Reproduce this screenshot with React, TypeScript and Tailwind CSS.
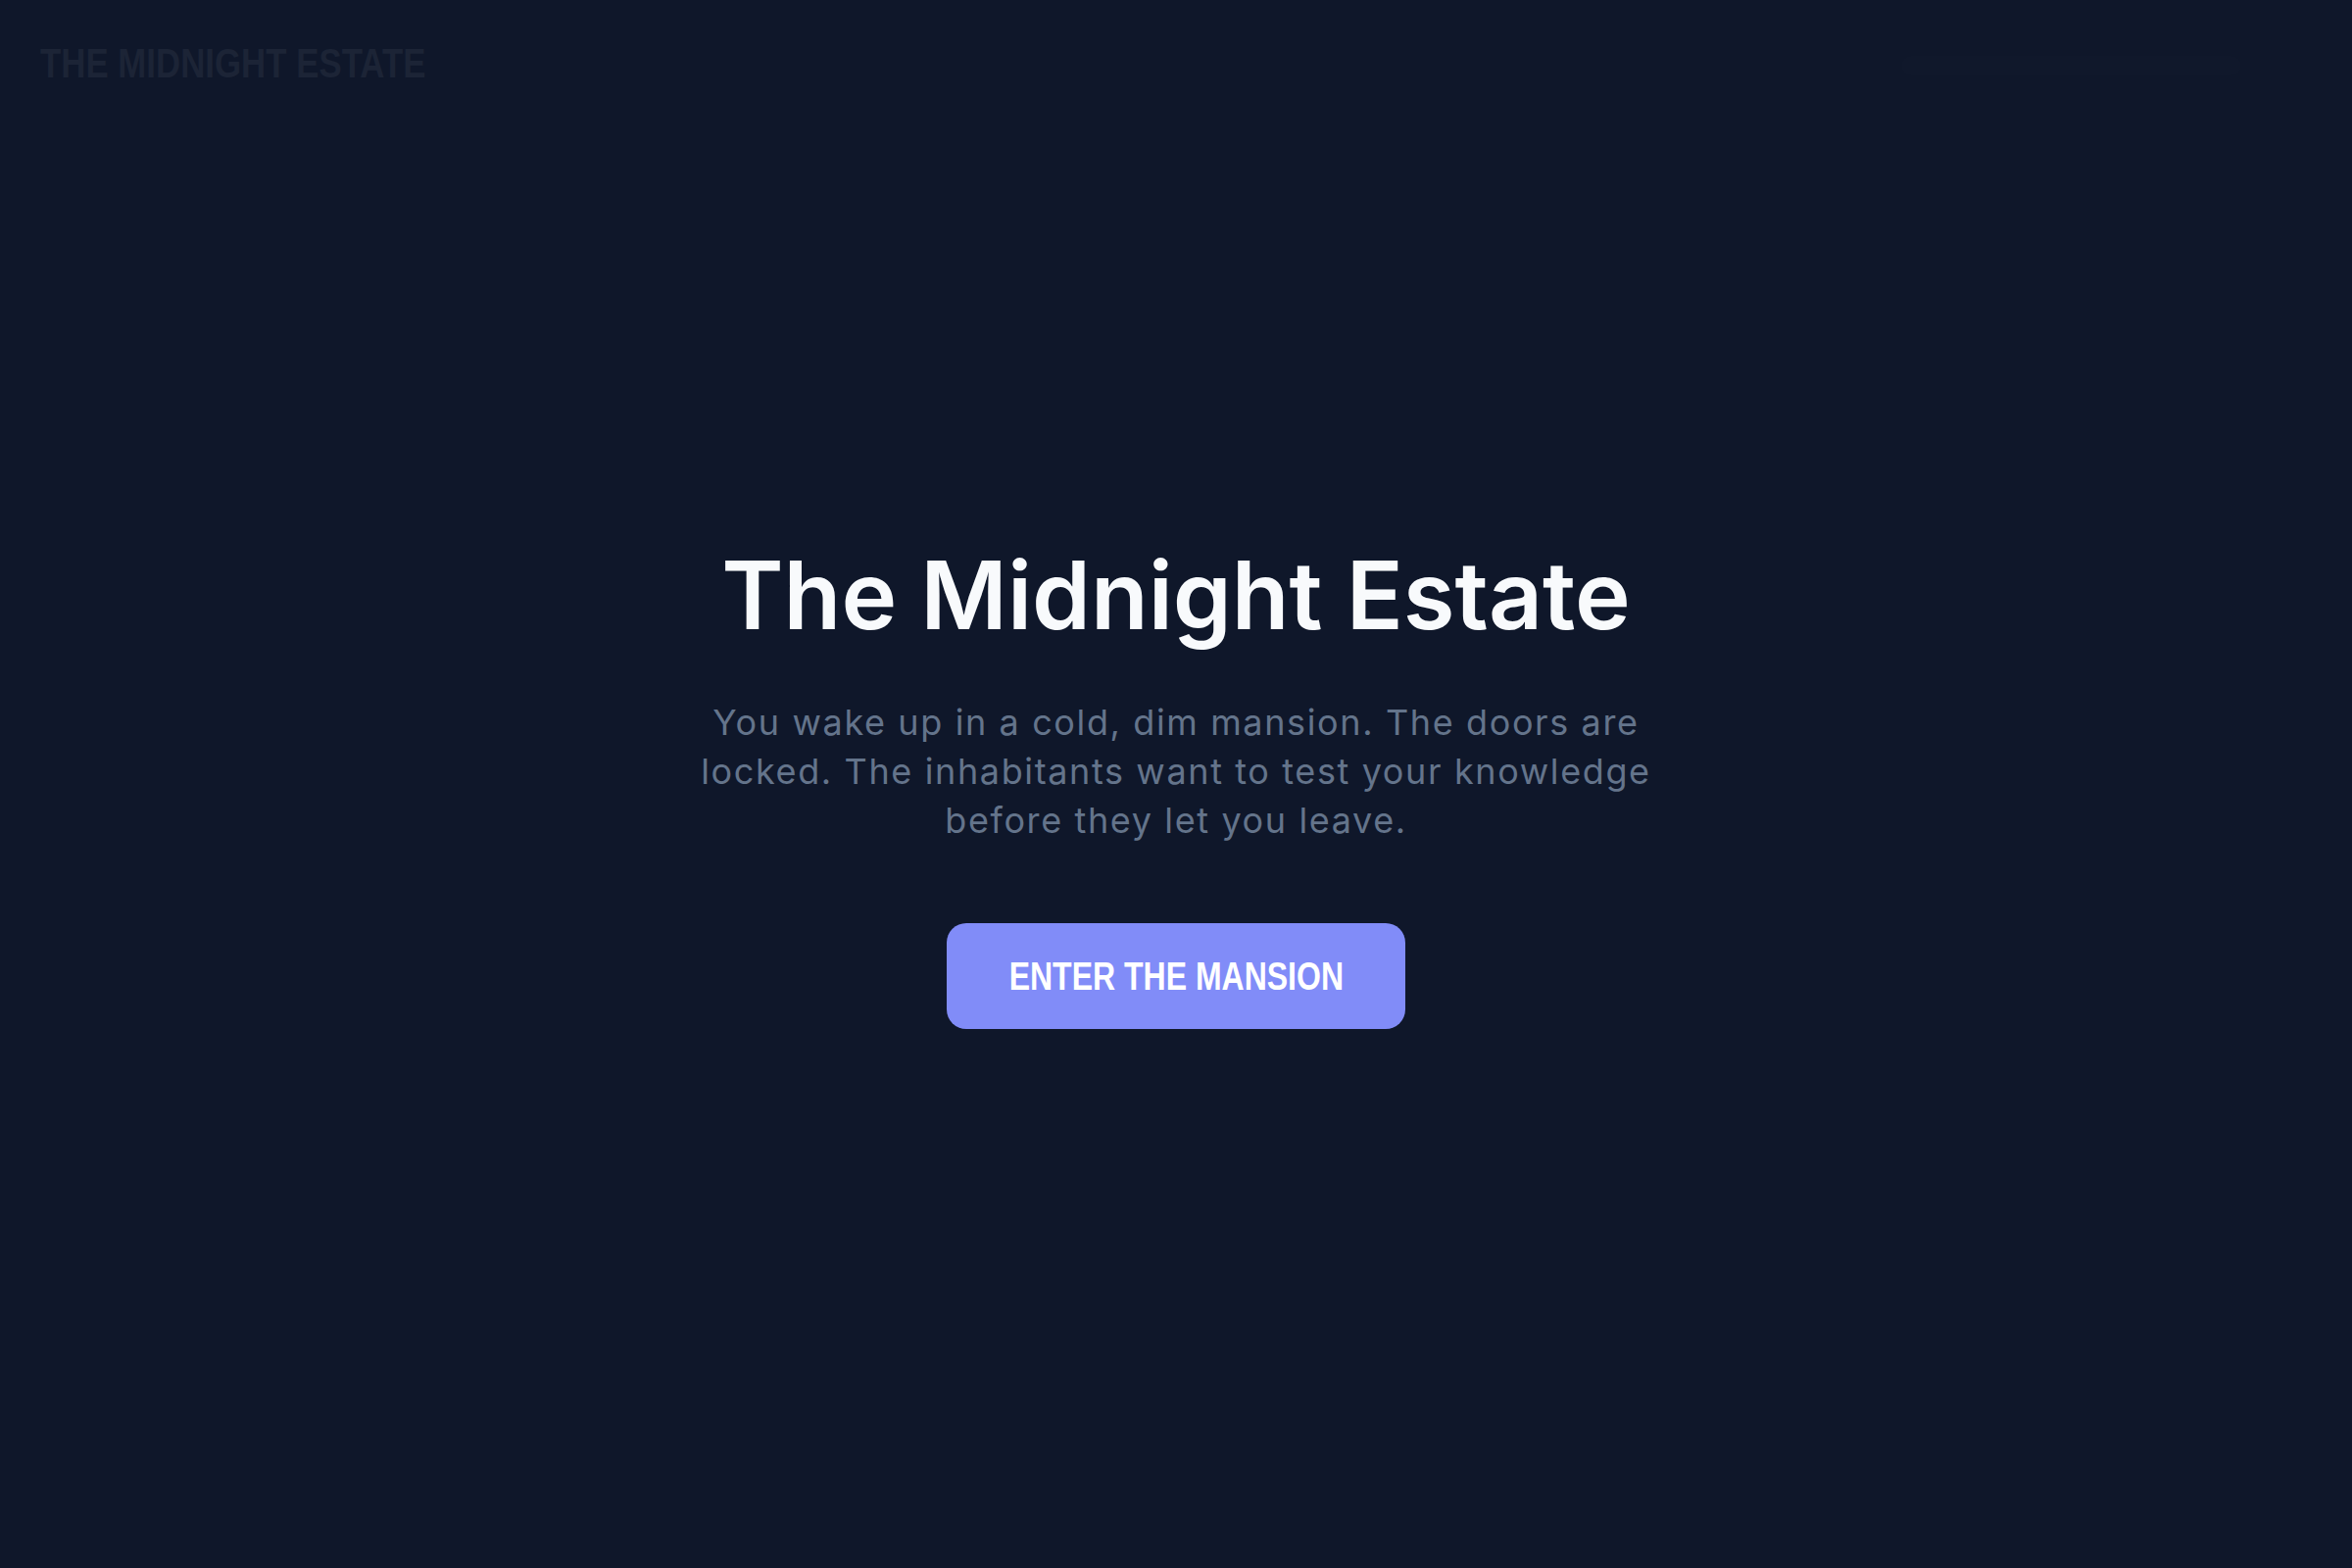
const narrow = { fontFamily: '"Liberation Sans Narrow", "Liberation Sans", Arial, sans-serif' }

export default function App() {
  return (
    <div className="grid min-h-screen bg-[#0f172a] text-slate-50" style={{ fontFamily: 'Inter, "Noto Sans", sans-serif' }}>
      {/* Brand mark */}
      <header className="col-start-1 row-start-1 flex items-start justify-between self-start px-[41px] pt-[43px]">
        <span
          className="inline-block origin-left scale-x-[0.81] whitespace-nowrap text-[43px] font-bold leading-none text-[#1c2436]"
          style={narrow}
        >
          THE MIDNIGHT ESTATE
        </span>
        <div className="mt-[14px] mr-[72px] h-[20px] w-[347px] rounded-full bg-white/[0.007]" />
      </header>

      {/* Intro */}
      <main className="col-start-1 row-start-1 flex flex-col items-center justify-center px-8 text-center">
        <h1 className="text-[96px] font-semibold leading-[1.2] text-[#f8fafc]">The Midnight Estate</h1>
        <p className="mt-[46px] max-w-[1000px] text-[36px] leading-[1.4] tracking-[0.045em] text-[#64748b]">
          You wake up in a cold, dim mansion. The doors are locked. The inhabitants want to test your knowledge before
          they let you leave.
        </p>
        <button className="mt-[79px] flex h-[108px] w-[468px] items-center justify-center rounded-[20px] bg-[#818cf8] text-white">
          <span className="inline-block scale-x-[0.8] whitespace-nowrap text-[40px] font-bold leading-none" style={narrow}>
            ENTER THE MANSION
          </span>
        </button>
      </main>
    </div>
  )
}
